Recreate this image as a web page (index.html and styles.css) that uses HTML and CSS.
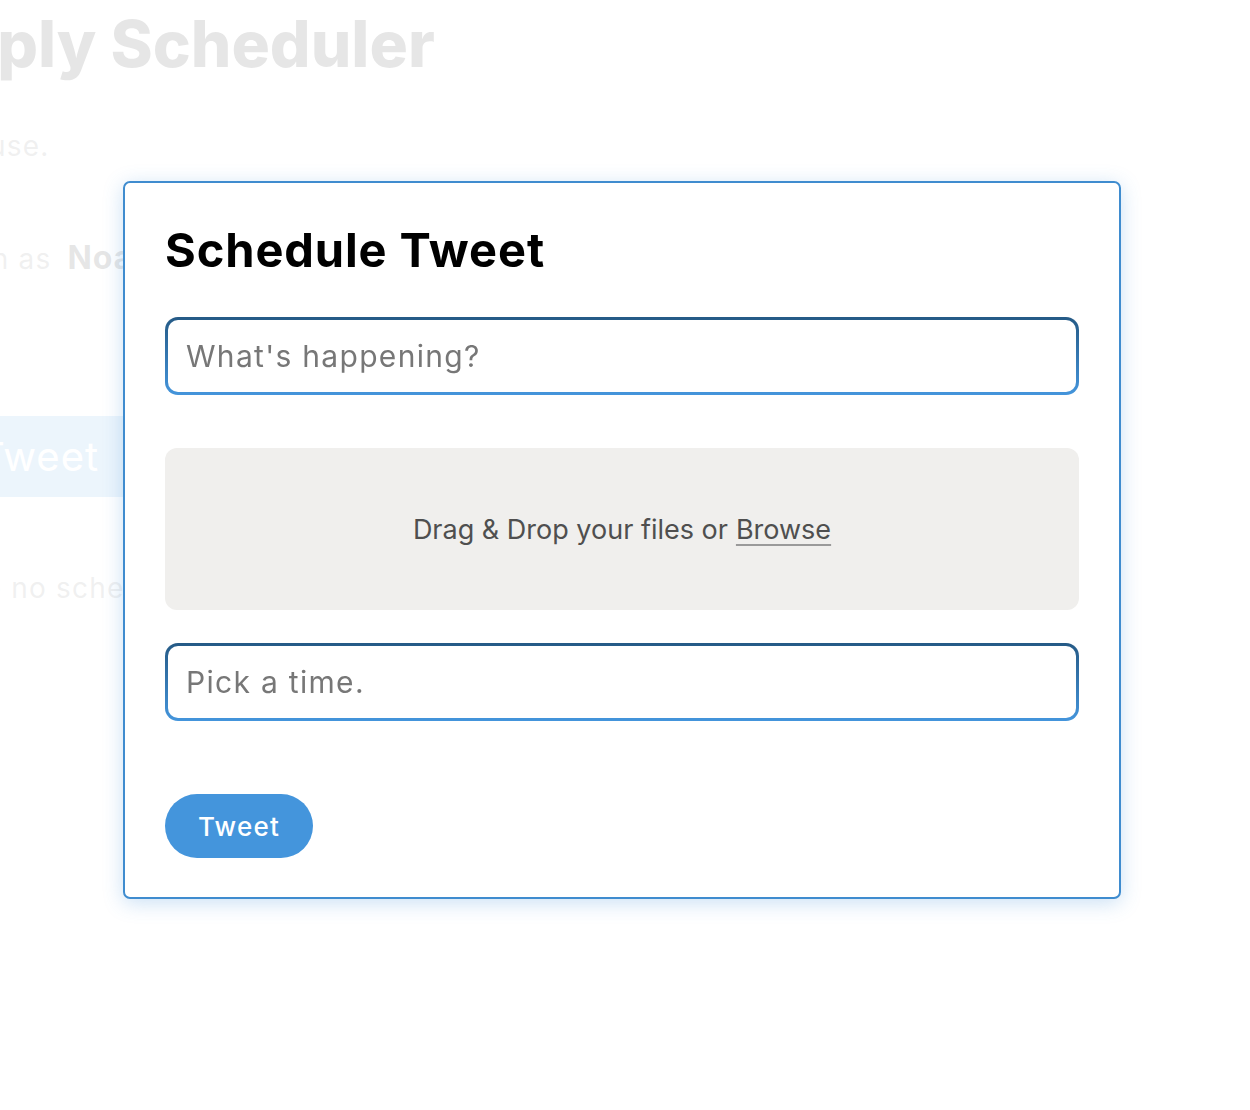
FILE: index.html
```html
<!DOCTYPE html>
<html lang="en">
<head>
<meta charset="utf-8">
<title>Reply Scheduler</title>
<link rel="stylesheet" href="styles.css">
</head>
<body>
<div class="bg">
  <h1 class="bg-title">Reply Scheduler</h1>
  <p class="bg-text bg-sub">Simple to use.</p>
  <p class="bg-text bg-login">Logged in as <b>Noah</b></p>
  <div class="bg-btn">Tweet</div>
  <p class="bg-text bg-empty">There are no scheduled tweets.</p>
</div>
<div class="overlay"></div>
<div class="modal">
  <h2 class="modal-title">Schedule Tweet</h2>
  <div class="field"><input class="field-input" type="text" placeholder="What's happening?"></div>
  <div class="drop">Drag &amp; Drop your files or <span class="browse">Browse</span></div>
  <div class="field field-time"><input class="field-input" type="text" placeholder="Pick a time."></div>
  <button class="tweet-btn">Tweet</button>
</div>
</body>
</html>
```
FILE: styles.css
```css
html, body {
  margin: 0;
  padding: 0;
  background: #fff;
  font-family: Inter, "Open Sans", sans-serif;
  width: 1250px;
  height: 1110px;
  overflow: hidden;
}
.bg {
  padding-top: 0;
}
.bg-title {
  margin: 0 0 0 -83px;
  font-size: 64px;
  font-weight: 800;
  color: #000;
  line-height: 88px;
  white-space: nowrap;
}
.bg-text {
  font-size: 28px;
  color: #666;
  margin: 0;
  letter-spacing: 1.2px;
  white-space: nowrap;
  line-height: 40px;
}
.bg-sub { margin-top: 38px; margin-left: -154px; }
.bg-login { margin-top: 72px; margin-left: -133px; }
.bg-login b { font-size: 32px; color: #000; font-weight: 700; letter-spacing: 0.8px; margin-left: 7px; }
.bg-btn {
  margin-top: 137px;
  width: 260px;
  height: 81px;
  background: #4495dc;
  color: #fff;
  font-size: 40px;
  letter-spacing: 1px;
  display: flex;
  align-items: center;
  box-sizing: border-box;
  margin-left: -29px;
  padding-left: 8px;
}
.bg-empty { margin-top: 71px; margin-left: -136px; }
.overlay {
  position: fixed;
  inset: 0;
  background: rgba(255,255,255,0.9);
}
.modal {
  position: absolute;
  left: 123px;
  top: 181px;
  width: 998px;
  box-sizing: border-box;
  border: 2px solid #3f8ccf;
  border-radius: 7px;
  background: #fff;
  box-shadow: 0 4px 20px rgba(66,145,220,0.28);
  padding: 39px 40px 39px 40px;
  display: flex;
  flex-direction: column;
  align-items: flex-start;
}
.modal > * { flex-shrink: 0; }
.modal-title {
  margin: 0;
  font-size: 47px;
  font-weight: 700;
  letter-spacing: 0.9px;
  color: #000;
  line-height: 56px;
}
.field {
  align-self: stretch;
  margin-top: 39px;
  border: 3px solid transparent;
  border-radius: 13px;
  background: linear-gradient(#fff, #fff) padding-box, linear-gradient(#255a86, #4495dc) border-box;
  height: 78px;
  box-sizing: border-box;
  display: flex;
}
.field-time { margin-top: 33px; }
.field-input {
  flex: 1;
  border: 0;
  outline: 0;
  background: transparent;
  font-family: inherit;
  font-size: 30px;
  letter-spacing: 1.3px;
  padding: 0 18px;
  color: #333;
  min-width: 0;
}
.field-input::placeholder { color: #777; }
.drop {
  align-self: stretch;
  margin-top: 53px;
  height: 162px;
  background: #f0efed;
  border-radius: 12px;
  display: flex;
  align-items: center;
  justify-content: center;
  font-size: 27px;
  color: #4f4f4f;
}
.browse {
  margin-left: 8px;
  text-decoration: underline;
  text-decoration-color: #9a9a9a;
  text-decoration-thickness: 2px;
  text-underline-offset: 5px;
}
.tweet-btn {
  margin-top: 73px;
  width: 148px;
  height: 64px;
  border: 0;
  border-radius: 32px;
  background: #4495dc;
  color: #fff;
  font-family: inherit;
  font-size: 26px;
  font-weight: 500;
  letter-spacing: 1.2px;
  padding: 0;
}
```
